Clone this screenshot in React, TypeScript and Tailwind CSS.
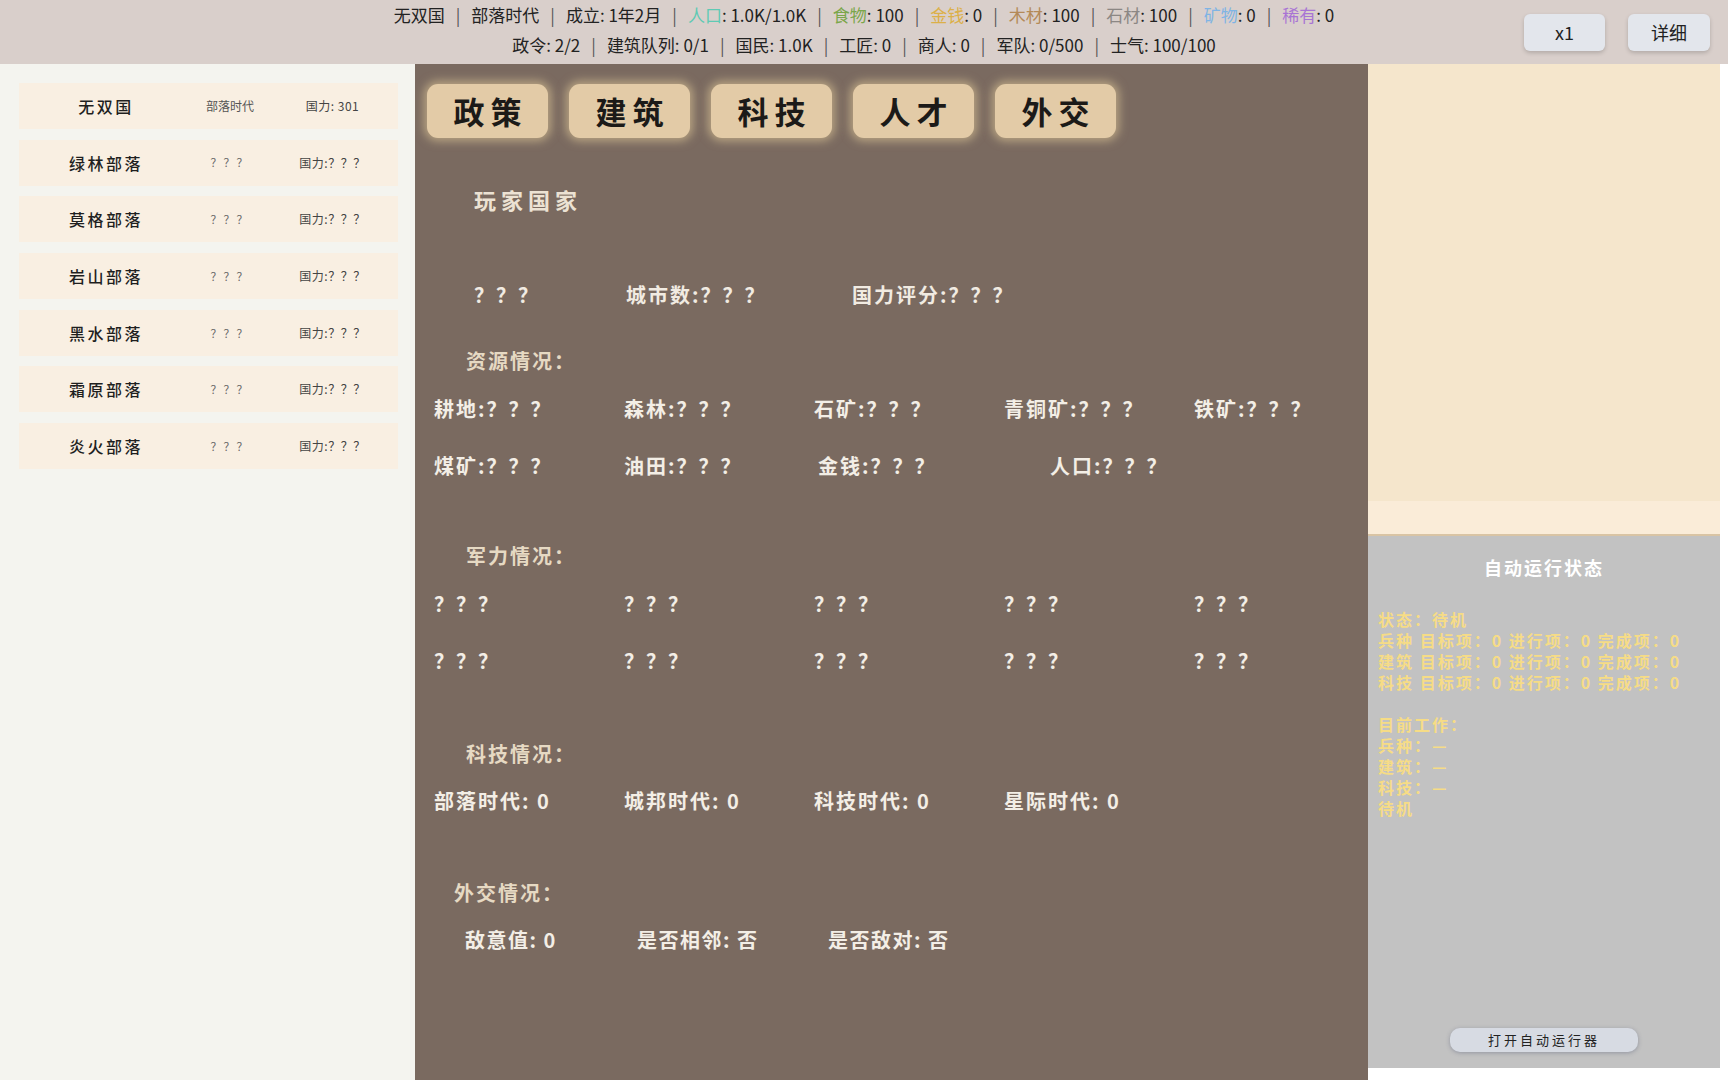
import React from 'react';

const nations = [
  { name: '无双国', age: '部落时代', power: '国力: 301', self: true },
  { name: '绿林部落', age: '？？？', power: '国力:？？？' },
  { name: '莫格部落', age: '？？？', power: '国力:？？？' },
  { name: '岩山部落', age: '？？？', power: '国力:？？？' },
  { name: '黑水部落', age: '？？？', power: '国力:？？？' },
  { name: '霜原部落', age: '？？？', power: '国力:？？？' },
  { name: '炎火部落', age: '？？？', power: '国力:？？？' },
];

const tabs = ['政策', '建筑', '科技', '人才', '外交'];

function Sep() {
  return <span className="mx-[11px] text-[#555]">|</span>;
}

function TopBar() {
  return (
    <header className="h-[64px] shrink-0 bg-[#d9cfcb] grid grid-cols-[1fr_auto_1fr] text-[#222]">
      <div />
      <div className="flex flex-col items-center text-[17px] leading-[30px] whitespace-nowrap">
        <div>
          无双国<Sep />部落时代<Sep />成立: 1年2月<Sep />
          <span className="text-[#5fcab4]">人口</span>: 1.0K/1.0K<Sep />
          <span className="text-[#7aa64a]">食物</span>: 100<Sep />
          <span className="text-[#dcb048]">金钱</span>: 0<Sep />
          <span className="text-[#b48a58]">木材</span>: 100<Sep />
          <span className="text-[#8c8784]">石材</span>: 100<Sep />
          <span className="text-[#7fb4e4]">矿物</span>: 0<Sep />
          <span className="text-[#a874d4]">稀有</span>: 0
        </div>
        <div>
          政令: 2/2<Sep />建筑队列: 0/1<Sep />国民: 1.0K<Sep />工匠: 0<Sep />商人: 0<Sep />军队: 0/500<Sep />士气: 100/100
        </div>
      </div>
      <div className="flex items-center justify-end gap-[23px] pr-[18px]">
        <button className="w-[81px] h-[37px] rounded-md bg-[#e3e6ec] shadow-[0_2px_4px_rgba(0,0,0,0.18)] text-[18px] text-[#222]">x1</button>
        <button className="w-[82px] h-[37px] rounded-md bg-[#e3e6ec] shadow-[0_2px_4px_rgba(0,0,0,0.18)] text-[18px] text-[#222]">详细</button>
      </div>
    </header>
  );
}

function NationList() {
  return (
    <aside className="w-[415px] shrink-0 bg-[#f4f4ef] pt-[19px] pl-[19px] flex flex-col gap-[10.7px]">
      {nations.map(n => (
        <div key={n.name} className="w-[379px] h-[46px] bg-[#f9efe2] grid grid-cols-[174px_74px_131px] items-center text-center">
          <span className="text-[16px] font-medium tracking-[2.5px] text-[#1f1f1f]">{n.name}</span>
          <span className={n.self ? 'text-[12px] text-[#555]' : 'text-[11px] tracking-[2px] text-[#666]'}>{n.age}</span>
          <span className="text-[12px] tracking-[0.5px] text-[#444]">{n.power}</span>
        </div>
      ))}
    </aside>
  );
}

function Heading({ children, mt, pl = 'pl-[51px]' }: { children: React.ReactNode; mt: string; pl?: string }) {
  return <div className={`${mt} ${pl} h-[28px] leading-[28px] text-[20px] font-bold tracking-[2px] text-[#e6d9c3]`}>{children}</div>;
}

function Row5({ items, mt }: { items: React.ReactNode[]; mt: string }) {
  return (
    <div className={`${mt} pl-[19px] grid grid-cols-[repeat(5,190px)] h-[28px] leading-[28px] text-[20px] font-bold tracking-[2px] text-[#f3eee6] whitespace-nowrap`}>
      {items.map((it, i) => <span key={i}>{it}</span>)}
    </div>
  );
}

function MainPanel() {
  const q = '？？？';
  return (
    <main className="w-[953px] shrink-0 bg-[#7a6a60] flex flex-col">
      <div className="mt-[20px] pl-[12px] flex gap-[21px]">
        {tabs.map(t => (
          <button key={t} className="w-[121px] h-[54px] rounded-[11px] bg-[#e3cba7] shadow-[0_0_10px_3px_rgba(240,215,160,0.55)] text-[31px] font-bold tracking-[6px] pl-[6px] text-[#1c1a18]">
            {t}
          </button>
        ))}
      </div>
      <div className="mt-[47px] pl-[59px] h-[28px] leading-[28px] text-[22px] font-bold tracking-[5px] text-[#ece2d3]">玩家国家</div>
      <div className="mt-[68px] pl-[59px] flex h-[28px] leading-[28px] text-[20px] font-bold tracking-[2px] text-[#f1ebe2] whitespace-nowrap">
        <span className="w-[152px]">{q}</span>
        <span className="w-[226px]">城市数:{q}</span>
        <span>国力评分:{q}</span>
      </div>

      <Heading mt="mt-[38px]">资源情况：</Heading>
      <Row5 mt="mt-[20px]" items={[`耕地:${q}`, `森林:${q}`, `石矿:${q}`, `青铜矿:${q}`, `铁矿:${q}`]} />
      <Row5
        mt="mt-[29px]"
        items={[
          `煤矿:${q}`,
          `油田:${q}`,
          <span className="ml-[4px]">金钱:{q}</span>,
          <span className="ml-[46px]">人口:{q}</span>,
          '',
        ]}
      />

      <Heading mt="mt-[62px]">军力情况：</Heading>
      <Row5 mt="mt-[20px]" items={[q, q, q, q, q]} />
      <Row5 mt="mt-[29px]" items={[q, q, q, q, q]} />

      <Heading mt="mt-[65px]">科技情况：</Heading>
      <Row5 mt="mt-[19px]" items={['部落时代: 0', '城邦时代: 0', '科技时代: 0', '星际时代: 0', '']} />

      <Heading mt="mt-[64px]" pl="pl-[39px]">外交情况：</Heading>
      <div className="mt-[19px] pl-[50px] flex h-[28px] leading-[28px] text-[20px] font-bold tracking-[1.5px] text-[#f3eee6] whitespace-nowrap">
        <span className="w-[172px]">敌意值: 0</span>
        <span className="w-[191px]">是否相邻: 否</span>
        <span>是否敌对: 否</span>
      </div>
    </main>
  );
}

function RightPanel() {
  const lines = [
    '状态：待机',
    '兵种 目标项：0 进行项：0 完成项：0',
    '建筑 目标项：0 进行项：0 完成项：0',
    '科技 目标项：0 进行项：0 完成项：0',
    '',
    '目前工作：',
    '兵种：—',
    '建筑：—',
    '科技：—',
    '待机',
  ];
  return (
    <aside className="w-[352px] shrink-0 flex flex-col">
      <div className="h-[437px] bg-[#f5e6cc]" />
      <div className="h-[35px] bg-[#faecd8] border-b-2 border-[#d9c4a4]" />
      <div className="h-[532px] bg-[#c2c2c2] flex flex-col">
        <div className="mt-[17px] h-[28px] leading-[28px] text-center text-[18px] font-bold tracking-[2px] text-white">自动运行状态</div>
        <div className="mt-[28px] pl-[10px] text-[16px] leading-[21px] font-bold tracking-[2px] text-[#f6dc86] whitespace-nowrap">
          {lines.map((l, i) => (
            <div key={i} className="h-[21px] leading-[21px]">{l}</div>
          ))}
        </div>
        <div className="mt-auto mb-[16px] flex justify-center">
          <button className="w-[188px] h-[24px] rounded-[10px] bg-[#d7dbe3] shadow-[0_1px_4px_rgba(60,70,100,0.35)] text-[13px] tracking-[3px] text-[#222]">打开自动运行器</button>
        </div>
      </div>
    </aside>
  );
}

export default function App() {
  return (
    <div className="w-[1728px] h-[1080px] bg-white flex flex-col overflow-hidden font-[family-name:'Noto_Sans_CJK_SC','Noto_Sans',sans-serif]">
      <TopBar />
      <div className="flex flex-1">
        <NationList />
        <MainPanel />
        <RightPanel />
      </div>
    </div>
  );
}
